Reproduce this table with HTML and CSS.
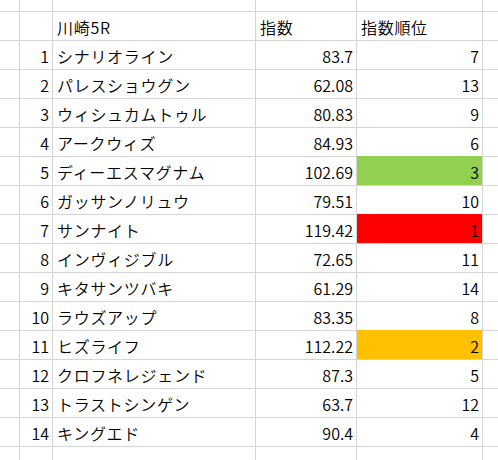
FILE: index.html
```html
<!DOCTYPE html>
<html lang="ja">
<head>
<meta charset="utf-8">
<link rel="stylesheet" href="styles.css">
</head>
<body>
<div class="sheet">
  <div class="c"></div><div class="c"></div><div class="c"></div><div class="c"></div><div class="c"></div><div class="c"></div>

  <div class="c"></div><div class="c"></div><div class="c t">川崎5R</div><div class="c t">指数</div><div class="c t">指数順位</div><div class="c"></div>

  <div class="c"></div><div class="c n">1</div><div class="c t">シナリオライン</div><div class="c n">83.7</div><div class="c n">7</div><div class="c"></div>
  <div class="c"></div><div class="c n">2</div><div class="c t">パレスショウグン</div><div class="c n">62.08</div><div class="c n">13</div><div class="c"></div>
  <div class="c"></div><div class="c n">3</div><div class="c t">ウィシュカムトゥル</div><div class="c n">80.83</div><div class="c n">9</div><div class="c"></div>
  <div class="c"></div><div class="c n">4</div><div class="c t">アークウィズ</div><div class="c n">84.93</div><div class="c n">6</div><div class="c"></div>
  <div class="c"></div><div class="c n">5</div><div class="c t">ディーエスマグナム</div><div class="c n">102.69</div><div class="c n green">3</div><div class="c"></div>
  <div class="c"></div><div class="c n">6</div><div class="c t">ガッサンノリュウ</div><div class="c n">79.51</div><div class="c n">10</div><div class="c"></div>
  <div class="c"></div><div class="c n">7</div><div class="c t">サンナイト</div><div class="c n">119.42</div><div class="c n red">1</div><div class="c"></div>
  <div class="c"></div><div class="c n">8</div><div class="c t">インヴィジブル</div><div class="c n">72.65</div><div class="c n">11</div><div class="c"></div>
  <div class="c"></div><div class="c n">9</div><div class="c t">キタサンツバキ</div><div class="c n">61.29</div><div class="c n">14</div><div class="c"></div>
  <div class="c"></div><div class="c n">10</div><div class="c t">ラウズアップ</div><div class="c n">83.35</div><div class="c n">8</div><div class="c"></div>
  <div class="c"></div><div class="c n">11</div><div class="c t">ヒズライフ</div><div class="c n">112.22</div><div class="c n orange">2</div><div class="c"></div>
  <div class="c"></div><div class="c n">12</div><div class="c t">クロフネレジェンド</div><div class="c n">87.3</div><div class="c n">5</div><div class="c"></div>
  <div class="c"></div><div class="c n">13</div><div class="c t">トラストシンゲン</div><div class="c n">63.7</div><div class="c n">12</div><div class="c"></div>
  <div class="c"></div><div class="c n">14</div><div class="c t">キングエド</div><div class="c n">90.4</div><div class="c n">4</div><div class="c"></div>

  <div class="c"></div><div class="c"></div><div class="c"></div><div class="c"></div><div class="c"></div><div class="c"></div>
</div>
</body>
</html>
```
FILE: styles.css
```css
html, body {
  margin: 0;
  padding: 0;
  background: #ffffff;
  overflow: hidden;
}
.sheet {
  display: grid;
  grid-template-columns: 19px 32px 202px 100px 125px 1fr;
  grid-template-rows: 11px repeat(15, 28px) 20px;
  gap: 1px;
  background: #d4d4d4;
  width: 498px;
  height: 460px;
  overflow: hidden;
  font-family: "Noto Sans CJK JP", "Noto Sans", sans-serif;
  font-size: 16px;
  font-weight: 350;
  color: #000;
}
.c {
  background: #ffffff;
  display: flex;
  align-items: center;
  line-height: 28px;
  padding-top: 1px;
  white-space: nowrap;
  overflow: hidden;
}
.t {
  padding-left: 4px;
  letter-spacing: 0.7px;
}
.n {
  justify-content: flex-end;
  padding-right: 3px;
}
.green {
  background: #92d050;
  box-shadow: 0 -1px 0 #92d050;
}
.red {
  background: #ff0000;
  box-shadow: 0 -1px 0 #ff0000;
}
.orange {
  background: #ffc000;
  box-shadow: 0 -1px 0 #ffc000;
}
```
